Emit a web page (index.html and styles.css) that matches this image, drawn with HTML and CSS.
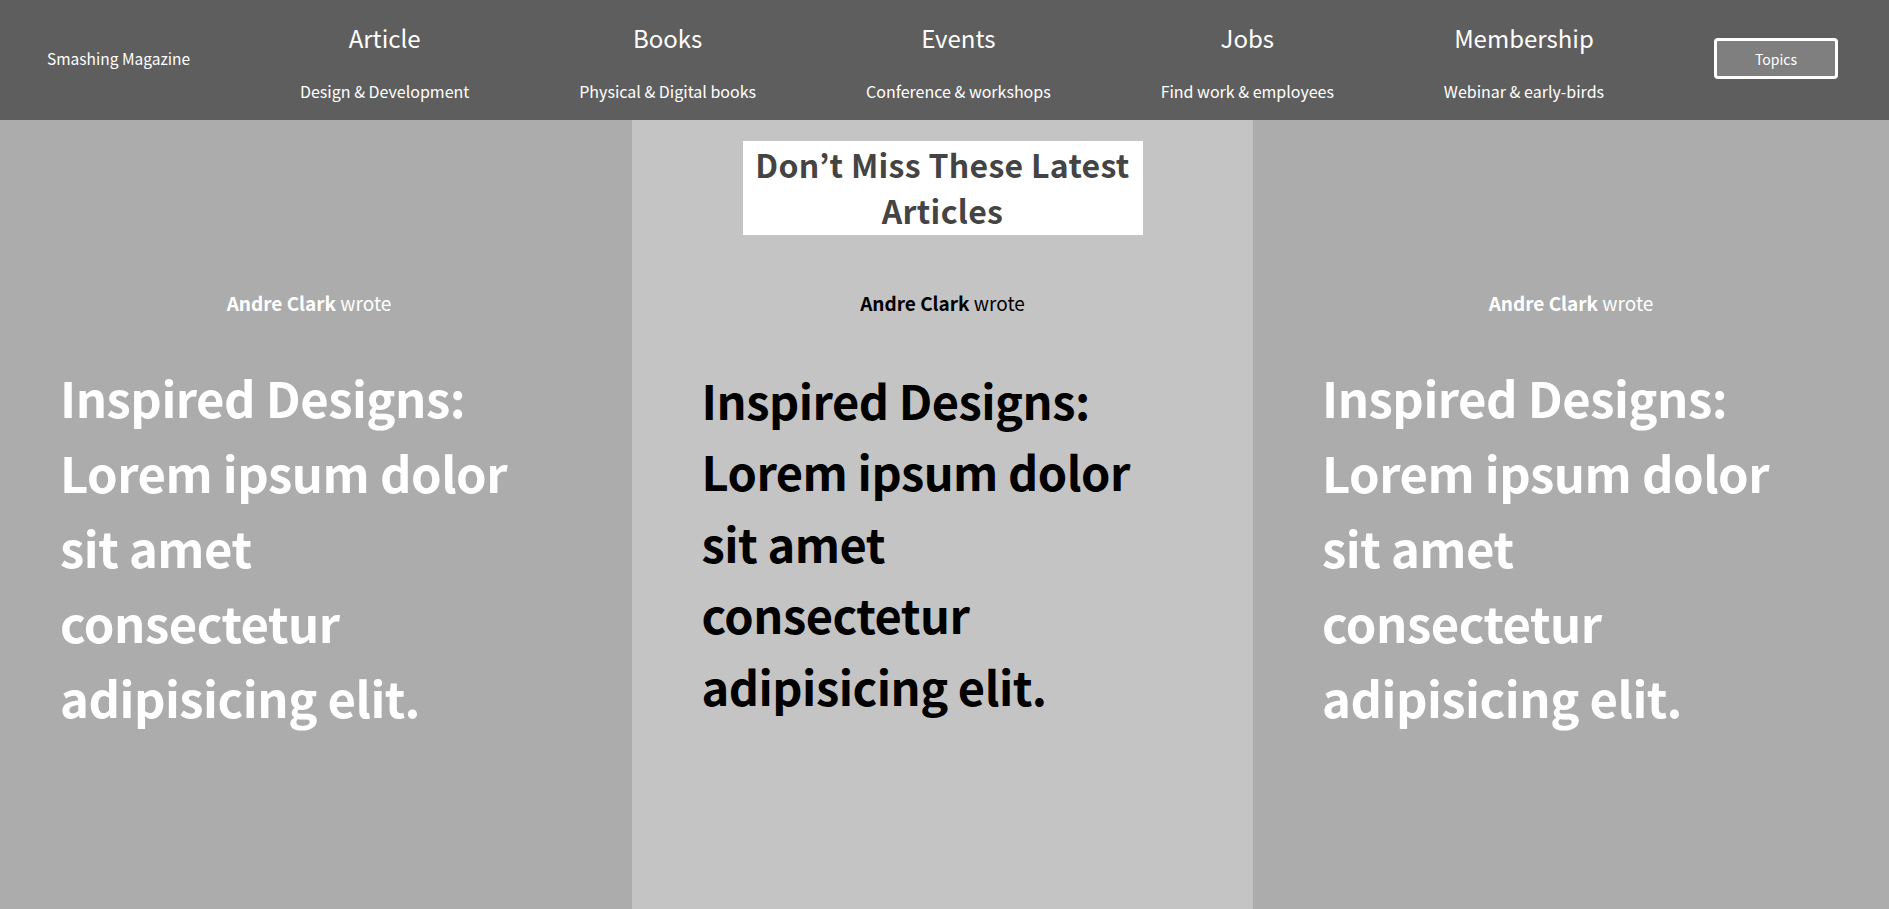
FILE: index.html
```html
<!DOCTYPE html>
<html lang="en">
<head>
<meta charset="utf-8">
<title>Smashing Magazine</title>
<link rel="stylesheet" href="styles.css">
</head>
<body>
<header class="site-header">
  <div class="logo">Smashing Magazine</div>
  <nav class="nav-item"><span class="nav-title">Article</span><span class="nav-sub">Design &amp; Development</span></nav>
  <nav class="nav-item"><span class="nav-title">Books</span><span class="nav-sub">Physical &amp; Digital books</span></nav>
  <nav class="nav-item"><span class="nav-title">Events</span><span class="nav-sub">Conference &amp; workshops</span></nav>
  <nav class="nav-item"><span class="nav-title">Jobs</span><span class="nav-sub">Find work &amp; employees</span></nav>
  <nav class="nav-item"><span class="nav-title">Membership</span><span class="nav-sub">Webinar &amp; early-birds</span></nav>
  <button class="topics-btn">Topics</button>
</header>
<main class="latest">
  <section class="col col-side col-left">
    <article class="card">
      <p class="author"><strong>Andre Clark</strong> wrote</p>
      <h2 class="card-title">Inspired Designs:<br>Lorem ipsum dolor<br>sit amet<br>consectetur<br>adipisicing elit.</h2>
    </article>
  </section>
  <section class="col col-mid">
    <h1 class="section-title">Don’t Miss These Latest Articles</h1>
    <article class="card card-mid">
      <p class="author"><strong>Andre Clark</strong> wrote</p>
      <h2 class="card-title">Inspired Designs:<br>Lorem ipsum dolor<br>sit amet<br>consectetur<br>adipisicing elit.</h2>
    </article>
  </section>
  <section class="col col-side col-right">
    <article class="card">
      <p class="author"><strong>Andre Clark</strong> wrote</p>
      <h2 class="card-title">Inspired Designs:<br>Lorem ipsum dolor<br>sit amet<br>consectetur<br>adipisicing elit.</h2>
    </article>
  </section>
</main>
</body>
</html>
```
FILE: styles.css
```css
* { box-sizing: border-box; }
html, body { margin: 0; padding: 0; }
body {
  font-family: "Noto Sans CJK JP", "Noto Sans", sans-serif;
  background: #acacac;
  height: 909px;
  overflow: hidden;
}
.site-header {
  height: 120px;
  background: #5e5e5e;
  color: #fff;
  display: flex;
  justify-content: space-between;
  align-items: center;
  padding: 0 51px 3px 47px;
}
.logo { font-size: 15.5px; margin-bottom: 1px; }
.nav-item {
  display: flex;
  flex-direction: column;
  align-items: center;
  padding-top: 5px;
}
.nav-title { font-size: 24px; }
.nav-sub { font-size: 16px; margin-top: 24px; }
.topics-btn {
  font-family: inherit;
  font-size: 14px;
  color: #fff;
  background: #7f7f7f;
  border: 3px solid #fff;
  border-radius: 4px;
  width: 124px;
  height: 41px;
}
.latest {
  display: grid;
  grid-template-columns: 632fr 621fr 636fr;
  height: calc(909px - 120px);
}
.col { display: flex; flex-direction: column; align-items: center; }
.col-side { background: #acacac; color: #fff; }
.col-left { padding-right: 14px; }
.col-mid { background: #c4c4c4; color: #000; }
.section-title {
  margin: 21px 0 0;
  width: 400px;
  background: #fff;
  color: #444;
  font-size: 32px;
  font-weight: 700;
  text-align: center;
  line-height: 46px;
  letter-spacing: 0.3px;
  padding: 0 0 2px;
}
.card { width: 498px; }
.col-side .card { padding-top: 170px; }
.card-mid { width: 482px; padding-top: 55px; }
.author {
  margin: 0;
  text-align: center;
  font-size: 19px;
  line-height: 26px;
}
.author strong { font-weight: 700; }
.card-title {
  margin: 43px 0 0;
  font-size: 49px;
  line-height: 75px;
  font-weight: 700;
  letter-spacing: -0.5px;
}
.card-mid .card-title { font-size: 47px; line-height: 71.4px; margin-top: 48px; }
```
